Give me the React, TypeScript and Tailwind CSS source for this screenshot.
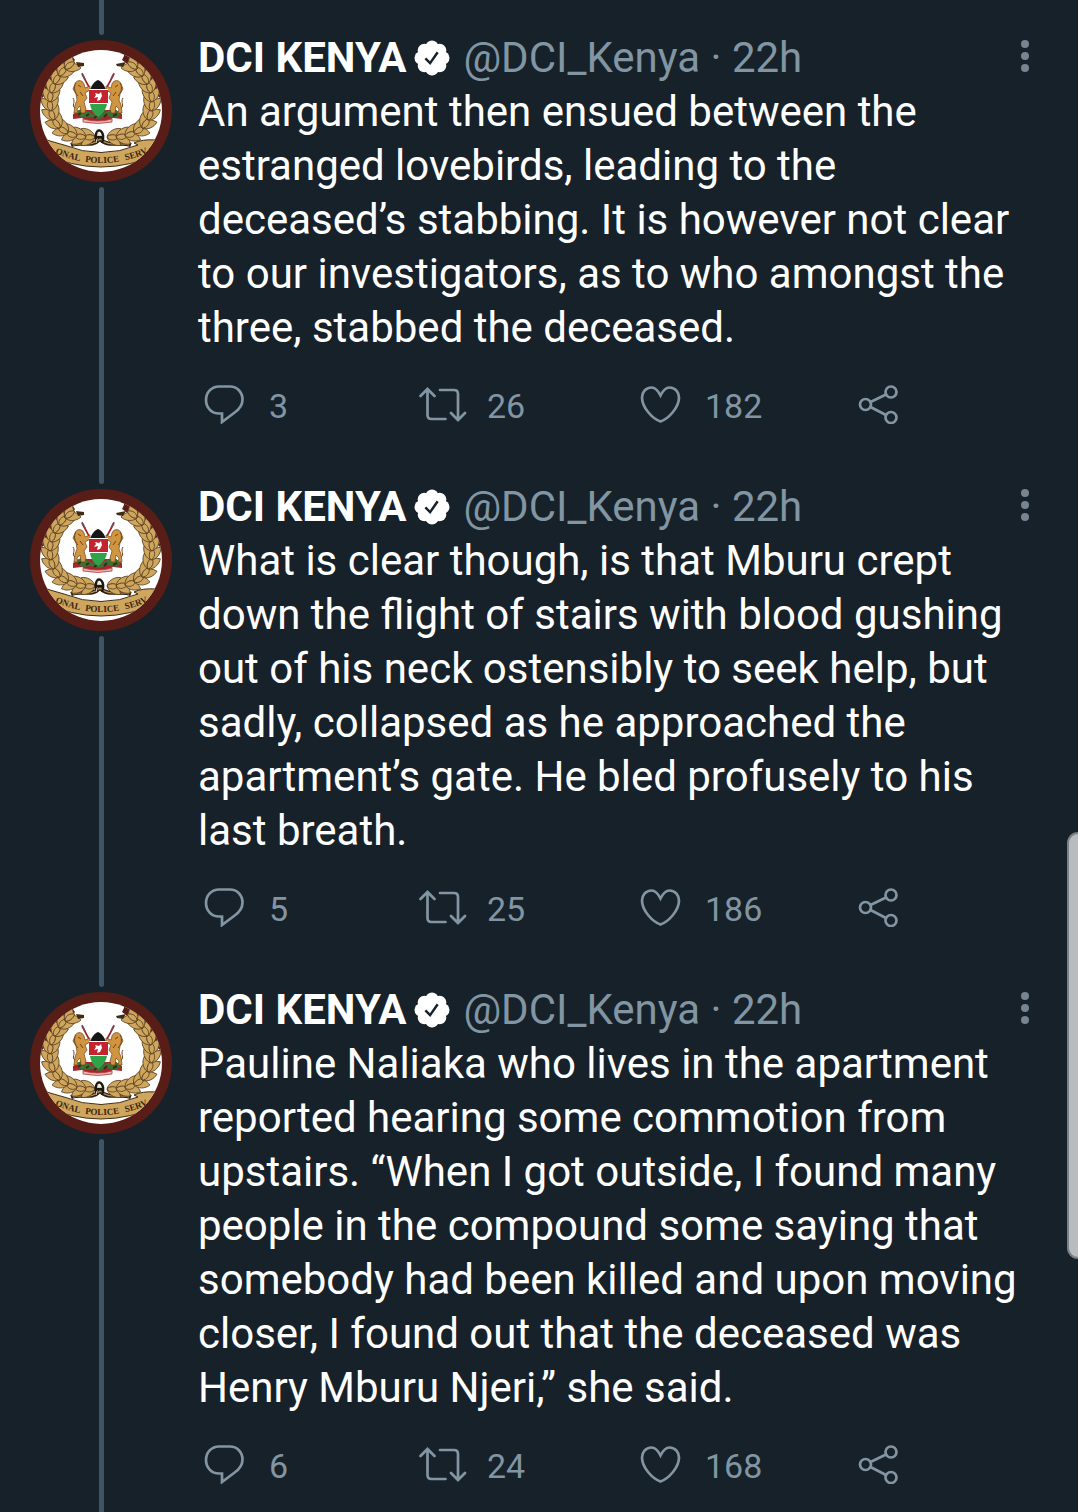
import React from "react";

type Tweet = {
  text: string;
  replies: number;
  retweets: number;
  likes: number;
};

const tweets: Tweet[] = [
  {
    text: "An argument then ensued between the estranged lovebirds, leading to the deceased’s stabbing. It is however not clear to our investigators, as to who amongst the three, stabbed the deceased.",
    replies: 3,
    retweets: 26,
    likes: 182,
  },
  {
    text: "What is clear though, is that Mburu crept down the flight of stairs with blood gushing out of his neck ostensibly to seek help, but sadly, collapsed as he approached the apartment’s gate. He bled profusely to his last breath.",
    replies: 5,
    retweets: 25,
    likes: 186,
  },
  {
    text: "Pauline Naliaka who lives in the apartment reported hearing some commotion from upstairs. “When I got outside, I found many people in the compound some saying that somebody had been killed and upon moving closer, I found out that the deceased was Henry Mburu Njeri,” she said.",
    replies: 6,
    retweets: 24,
    likes: 168,
  },
];

// stem of the left half of the wreath, from the knot up to the tip
const stem = [
  [65, 97], [56, 97], [47, 96], [38, 93], [30, 88], [24, 80], [21, 71],
  [20, 62], [21, 53], [24, 44], [29, 36], [35, 29], [42, 24],
];

const leaf = "M0 0C2 -7 10 -8 16 0C11 4 4 4 0 0Z";

const HalfWreath = () => (
  <g fill="#cfa65e" stroke="#5a4020" strokeWidth="0.8" strokeLinejoin="round">
    {stem.slice(0, -1).map(([x, y], i) => {
      const [nx, ny] = stem[i + 1];
      const angle = (Math.atan2(ny - y, nx - x) * 180) / Math.PI;
      return (
        <g key={i} transform={`translate(${x} ${y}) rotate(${angle})`}>
          <path d={leaf} transform="rotate(32)" />
          <path d={leaf} transform="scale(1 -1) rotate(32)" />
          <path d="M0 0C3 -4 8 -4 12 0C8 3 3 3 0 0Z" />
        </g>
      );
    })}
  </g>
);

const Lion = () => (
  <g>
    <path d="M52 34L59 47" stroke="#a01f22" strokeWidth="1.6" />
    <path d="M52 33L55 39" stroke="#6b5058" strokeWidth="1.6" />
    <path
      d="M45 44C46 40 52 39 54 44L55 48L60 46V50L55 53L57 58L54 62L56 69L55 73H51L50 66L47 69L48 73H44L45 65L47 60L46 54L43 49Z"
      fill="#cf9540"
      stroke="#6d431b"
      strokeWidth="0.7"
    />
    <path d="M46 43C43 47 45 53 48 56M48 45L51 47M50 52L53 56M45 68C41 66 46 62 43 58" fill="none" stroke="#6d431b" strokeWidth="1" />
  </g>
);

const Emblem = ({ id }: { id: string }) => (
  <svg viewBox="0 0 142 142" className="size-[142px]" role="img" aria-label="DCI Kenya avatar">
    <defs>
      <clipPath id={`${id}-disc`}>
        <circle cx="71" cy="71" r="61" />
      </clipPath>
      <path id={`${id}-band`} d="M16 109Q71 137 126 109" />
    </defs>
    <circle cx="71" cy="71" r="71" fill="#571d16" />
    <circle cx="71" cy="71" r="61" fill="#fff" />
    <path d="M10 60C12 35 28 18 43 10L42 16L45 20L40 27L20 50ZM132 60C130 35 114 18 94 10L94 16L92 20L102 27L122 50Z" fill="#571d16" clipPath={`url(#${id}-disc)`} />
    <g clipPath={`url(#${id}-disc)`}>
      <path d="M41 105C52 101 62 108 70 99C78 108 90 101 101 105" fill="none" stroke="#2b2015" strokeWidth="4" />
      <path d="M43 105C53 102 62 107 70 99C78 107 89 102 99 105" fill="none" stroke="#b58b48" strokeWidth="1.4" />
      <path d="M12 98L20 101L34 105Q71 120 108 105L104 103Q112 99 126 100L130 113Q71 141 12 113Z" fill="#cfa65e" stroke="#3f2c12" strokeWidth="1" />
      <HalfWreath />
      <g transform="translate(142 0) scale(-1 1)">
        <HalfWreath />
      </g>
    </g>
    <path d="M46 22L54 23L54 26L48 27M96 22L86 24L87 26L93 27" fill="#3f2c12" />
    <path d="M69 90C65 92 65 98 67 103M69 90C74 92 74 98 72 103M66 97H73" fill="none" stroke="#1c1812" strokeWidth="2.4" />
    <path d="M68 92L70 96M67 99L66 103" stroke="#e8dcc2" strokeWidth="1" />
    <g fill="#3a2510" fontFamily="Liberation Serif" fontSize="9" fontWeight="700" textAnchor="middle">
      <text><textPath href={`#${id}-band`} startOffset="20%">ONAL</textPath></text>
      <text><textPath href={`#${id}-band`} startOffset="51%">POLICE</textPath></text>
      <text><textPath href={`#${id}-band`} startOffset="82%">SERV</textPath></text>
    </g>
    <path d="M43 74L50 70H86L92 74V79L83 78L78 81H57L52 78L43 79Z" fill="#a4282b" />
    <path d="M45 72L51 69L59 72L68 77L77 71L86 70L91 74L86 78L77 76L70 79L60 77L52 78Z" fill="#397332" />
    <path d="M48 75L51 73M56 76L59 74M64 78L67 76M74 77L77 74M83 76L87 74" stroke="#332b20" strokeWidth="2" />
    <path d="M53 79Q68 83 82 79V82Q68 85 53 82Z" fill="#e7b8b5" stroke="#b23b3b" strokeWidth="0.8" />
    <Lion />
    <g transform="translate(136 0) scale(-1 1)">
      <Lion />
    </g>
    <path d="M60 50C62 44 65 41 68 40C71 41 74 44 76 50Z" fill="#171717" />
    <path d="M59 50H78V63H59Z" fill="#c42430" />
    <path d="M60 64H77C76 70 72 75 68 77C64 75 61 70 60 64Z" fill="#2fa34b" />
    <path d="M59 49.5H78M59 63.5H78" stroke="#fff" strokeWidth="1.1" />
    <path d="M65 53L69 54L71 52L72 56L70 60L67 61L68 57L64 58L66 55Z" fill="#fff" />
  </svg>
);

const VerifiedBadge = () => (
  <svg viewBox="0 0 38 38" className="size-9" role="img" aria-label="Verified account">
    <g fill="#fff">
      <circle cx="19" cy="19" r="14" />
      <circle cx="19" cy="7.5" r="7" />
      <circle cx="27.1" cy="10.9" r="7" />
      <circle cx="30.5" cy="19" r="7" />
      <circle cx="27.1" cy="27.1" r="7" />
      <circle cx="19" cy="30.5" r="7" />
      <circle cx="10.9" cy="27.1" r="7" />
      <circle cx="7.5" cy="19" r="7" />
      <circle cx="10.9" cy="10.9" r="7" />
    </g>
    <path d="M12 19.5L17 24.5L25 13" fill="none" stroke="#17212a" strokeWidth="2.6" />
  </svg>
);

const ActionIcon = ({ children }: { children: React.ReactNode }) => (
  <svg
    viewBox="0 0 48 40"
    className="h-10 w-12"
    fill="none"
    stroke="currentColor"
    strokeWidth="2.7"
    strokeLinecap="round"
    aria-hidden="true"
  >
    {children}
  </svg>
);

const Action = ({ label, count, children }: { label: string; count?: number; children: React.ReactNode }) => (
  <button type="button" aria-label={label} className="flex h-10 items-center gap-5 pl-[3px] text-left">
    <ActionIcon>{children}</ActionIcon>
    {count !== undefined && <span className="pt-1 text-[34px] leading-9">{count}</span>}
  </button>
);

const TweetRow = ({ tweet, id }: { tweet: Tweet; id: string }) => (
  <article className="flex">
    <div className="flex w-[198px] shrink-0 flex-col pl-[30px]">
      <div className="flex w-[142px] flex-1 flex-col items-center gap-[5px] pt-[5px]">
        <Emblem id={id} />
        <div className="w-[5px] flex-1 rounded-full bg-[#3d5466]" />
      </div>
    </div>

    <div className="min-w-0 flex-1 pt-px pr-2 pb-15">
      <header className="flex h-11 items-center pr-[35px] text-[42px] leading-11 text-[#8295a2]">
        <h2 className="font-bold text-white">DCI KENYA</h2>
        <span className="pr-[13px] pl-2">
          <VerifiedBadge />
        </span>
        <span className="whitespace-nowrap">@DCI_Kenya · 22h</span>
        <button type="button" aria-label="More" className="mb-1 ml-auto flex w-5 flex-col items-center gap-1">
          <span className="size-2 rounded-full bg-[#768591]" />
          <span className="size-2 rounded-full bg-[#768591]" />
          <span className="size-2 rounded-full bg-[#768591]" />
        </button>
      </header>

      <p className="mt-[5px] pr-10 text-[42px] leading-[54px] text-white">{tweet.text}</p>

      <div className="mt-[29px] grid grid-cols-4 text-[#8295a2]">
        <Action label="Reply" count={tweet.replies}>
          <path d="M18 2.5H29C36 2.5 41.5 8 41.5 15.5C41.5 21 39 25 33 29L21 38V29.5H18C10.5 29.5 5 23.5 5 16C5 8.5 10.5 2.5 18 2.5Z" />
        </Action>
        <Action label="Retweet" count={tweet.retweets}>
          <path d="M1.5 12L8.5 5L15.5 12M8.5 5V31Q8.5 35 12.5 35H26.5M21 6H35Q39 6 39 10V36M32 29L39 36L46 29" />
        </Action>
        <Action label="Like" count={tweet.likes}>
          <path d="M23.5 11.5C21 6.5 18.5 3.5 14.5 3.5C8.5 3.5 5 8.5 5 13.5C5 24 16 35 23.5 37.5C31 35 42 24 42 13.5C42 8.5 38.5 3.5 32.5 3.5C28.5 3.5 26 6.5 23.5 11.5Z" />
        </Action>
        <Action label="Share">
          <circle cx="10.5" cy="20.5" r="5.5" />
          <circle cx="36" cy="8" r="5.5" />
          <circle cx="36" cy="33.5" r="5.5" />
          <path d="M15.5 18L31 10.5M15.5 23L31 31" />
        </Action>
      </div>
    </div>
  </article>
);

export default function App() {
  return (
    <main className="relative h-screen overflow-hidden bg-[#17212a] font-['Roboto',sans-serif]">
      <div className="flex w-[172px] justify-center pl-[30px]">
        <div className="h-[35px] w-[5px] rounded-b-full bg-[#3d5466]" />
      </div>
      {tweets.map((tweet, i) => (
        <TweetRow key={i} tweet={tweet} id={`emblem-${i}`} />
      ))}
      <div className="absolute top-[55%] right-0 h-[427px] w-[11px] rounded-l-xl border-2 border-r-0 border-[#7b8085] bg-[#b8bcbf]" />
    </main>
  );
}
